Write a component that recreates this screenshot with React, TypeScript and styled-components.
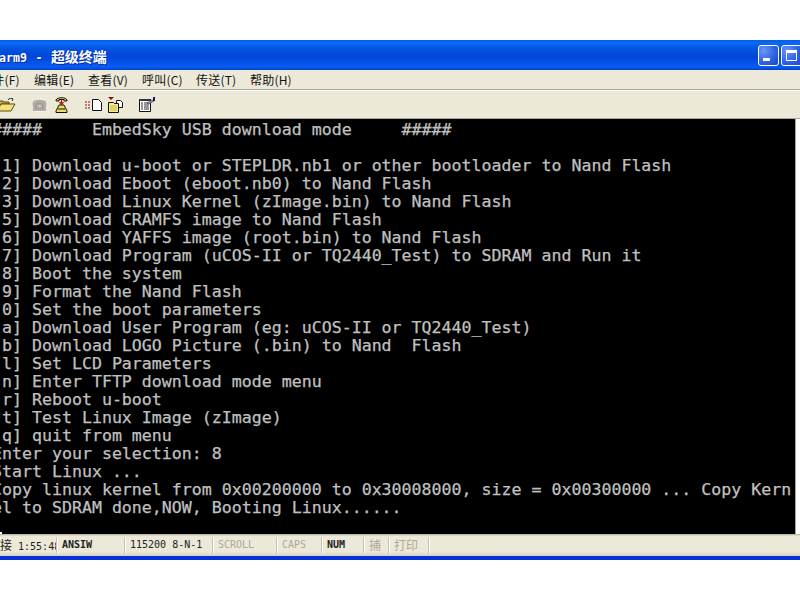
import { createGlobalStyle, styled } from 'styled-components'

const GlobalStyle = createGlobalStyle`
  html, body {
    margin: 0;
    padding: 0;
    height: 100%;
    background: #fff;
    overflow: hidden;
  }
`

const menus = ['文件(F)', '编辑(E)', '查看(V)', '呼叫(C)', '传送(T)', '帮助(H)']

const terminalText = `#####     EmbedSky USB download mode     #####

[1] Download u-boot or STEPLDR.nb1 or other bootloader to Nand Flash
[2] Download Eboot (eboot.nb0) to Nand Flash
[3] Download Linux Kernel (zImage.bin) to Nand Flash
[5] Download CRAMFS image to Nand Flash
[6] Download YAFFS image (root.bin) to Nand Flash
[7] Download Program (uCOS-II or TQ2440_Test) to SDRAM and Run it
[8] Boot the system
[9] Format the Nand Flash
[0] Set the boot parameters
[a] Download User Program (eg: uCOS-II or TQ2440_Test)
[b] Download LOGO Picture (.bin) to Nand  Flash
[l] Set LCD Parameters
[n] Enter TFTP download mode menu
[r] Reboot u-boot
[t] Test Linux Image (zImage)
[q] quit from menu
Enter your selection: 8
Start Linux ...
Copy linux kernel from 0x00200000 to 0x30008000, size = 0x00300000 ... Copy Kern
el to SDRAM done,NOW, Booting Linux......`

export default function App() {
  return (
    <>
      <GlobalStyle />
      <Window>
        <TitleBar>
          <TitleText>
            arm9 - <TitleHan>超级终端</TitleHan>
          </TitleText>
          <WindowButton aria-label="minimize">
            <svg width="19" height="19" viewBox="0 0 19 19">
              <rect x="4" y="12" width="7" height="3" fill="#fff" />
            </svg>
          </WindowButton>
          <WindowButton aria-label="maximize">
            <svg width="19" height="19" viewBox="0 0 19 19">
              <path d="M4.500 6.500h10v8h-10z" fill="none" stroke="#fff" />
              <rect x="4" y="4" width="11" height="3" fill="#fff" />
            </svg>
          </WindowButton>
        </TitleBar>
        <MenuBar>
          {menus.map((m) => (
            <MenuItem key={m}>{m}</MenuItem>
          ))}
        </MenuBar>
        <ToolBar>
          <ToolIcon $width={35}>
            <svg width="20" height="14" viewBox="0 0 20 14">
              <path d="M1 3h6l1 1h5v2H5L2 12H1z" fill="#c8a93a" stroke="#5a4a10" />
              <path d="M5 6h14l-4 7H1z" fill="#f6e27a" stroke="#5a4a10" />
              <path d="M12 2c1-2 3-2 5-1M17 1l-2-1M17 1l-1 2" fill="none" stroke="#333" />
            </svg>
          </ToolIcon>
          <ToolIcon $width={24}>
            <svg width="17" height="14" viewBox="0 0 17 14">
              <path d="M1 5C1 0 16 0 16 5v2c0 2-1 2-1 2l1 2c0 2-1 2.500-2 2.500H3c-1 0-2-.5-2-2.500l1-2s-1 0-1-2z" fill="#b0aea4" stroke="#f4f2ea" />
              <path d="M5 6h7M4 8h9M4 10h9" stroke="#8f8d84" />
              <ellipse cx="8.500" cy="8" rx="2.500" ry="1.500" fill="#c8c6bc" />
            </svg>
          </ToolIcon>
          <ToolIcon $width={30}>
            <svg width="13" height="16" viewBox="0 0 13 16">
              <path d="M1 3c1-3 10-3 11 0v1H9V2.500H4V4H1z" fill="#e8d050" stroke="#111" />
              <path d="M6.500 3v4M4.500 5l2 2.500 2-2.500" fill="none" stroke="#c02020" strokeWidth="1.300" />
              <path d="M4 8h5l3 6v1.500H1V14z" fill="#f0dc60" stroke="#111" />
              <path d="M3 12h7" stroke="#111" />
            </svg>
          </ToolIcon>
          <ToolIcon $width={23}>
            <svg width="17" height="12" viewBox="0 0 17 12">
              <path d="M0 3h2M3 3h2M0 6h2M3 6h2M0 9h2M3 9h2" stroke="#8a1010" />
              <path d="M7.500.5h6l3 3v8h-9z" fill="#fff" stroke="#111" />
            </svg>
          </ToolIcon>
          <ToolIcon $width={31}>
            <svg width="15" height="16" viewBox="0 0 15 16">
              <path d="M0 0h6L3 3z" fill="#8a1010" />
              <path d="M8.500 3.500h4l2 2v5h-6z" fill="#fff" stroke="#111" />
              <path d="M.5 5.500h5l1 1h4v9H.5z" fill="#f7ec8a" stroke="#111" />
              <path d="M2 9h7M2 11h7M2 13h7" stroke="#c8b84a" />
            </svg>
          </ToolIcon>
          <ToolIcon $width={22}>
            <svg width="16" height="15" viewBox="0 0 16 15">
              <path d="M.5 3.500h11v11H.5z" fill="#fff" stroke="#111" />
              <path d="M0 2h12v2H0z" fill="#333" />
              <path d="M2 6h2M5 6h5M2 8h2M5 8h5M2 10h2M5 10h5M2 12h2M5 12h5" stroke="#333" />
              <path d="M8 6l5-3 2 1-5 3z" fill="#8aa0b8" stroke="#334" strokeWidth=".6" />
              <rect x="14" y="0" width="2" height="4" fill="#0a1a70" />
            </svg>
          </ToolIcon>
        </ToolBar>
        <TerminalRow>
          <Screen>
            <Output>{terminalText}</Output>
            <Cursor />
          </Screen>
          <ScrollEdge />
        </TerminalRow>
        <StatusBar>
          <StatusCell $width={77} $on>
            <Han>连接</Han> 1:55:48
          </StatusCell>
          <StatusCell $width={68} $on $bold>
            ANSIW
          </StatusCell>
          <StatusCell $width={88} $on>
            115200 8-N-1
          </StatusCell>
          <StatusCell $width={64}>SCROLL</StatusCell>
          <StatusCell $width={45}>CAPS</StatusCell>
          <StatusCell $width={42} $on $bold>
            NUM
          </StatusCell>
          <StatusCell $width={25}>
            <Han>捕</Han>
          </StatusCell>
          <StatusCell $width={40}>
            <Han>打印</Han>
          </StatusCell>
        </StatusBar>
      </Window>
    </>
  )
}

const Window = styled.div`
  width: 840px;
  margin: 40px 0 0 -20px;
  display: flex;
  flex-direction: column;
  background: #ece9d8;
  border-bottom: 4px solid #0831d9;
  box-shadow: inset 0 -1px 0 #001ea0;
`

const TitleBar = styled.div`
  height: 30px;
  box-sizing: border-box;
  display: flex;
  align-items: center;
  gap: 2px;
  padding: 1px 18px 0 19px;
  background: linear-gradient(
    180deg,
    #0a5ae8 0%,
    #0a6af6 10%,
    #0353e0 30%,
    #0046d8 55%,
    #0556ec 80%,
    #0a5cf0 90%,
    #0340c8 100%
  );
`

const TitleText = styled.div`
  flex: 1;
  font: bold 11.6px 'DejaVu Sans Mono', monospace;
  word-spacing: 1.5px;
  color: #fff;
  text-shadow: 1px 1px 0 #0a2a9a;
  white-space: pre;
`

const TitleHan = styled.span`
  font: bold 14px 'Noto Sans CJK SC', sans-serif;
`

const WindowButton = styled.div`
  width: 21px;
  height: 21px;
  box-sizing: border-box;
  border: 1px solid #fff;
  border-radius: 3px;
  display: flex;
  background: radial-gradient(circle at 25% 25%, #6a96f6 0%, #2f62e6 55%, #1c44c8 100%);
`

const MenuBar = styled.div`
  height: 20px;
  box-sizing: border-box;
  display: flex;
  align-items: center;
  padding-left: 0;
  border-bottom: 1px solid #aca899;
`

const MenuItem = styled.div`
  width: 54px;
  font: 12px 'Noto Sans CJK SC', 'Liberation Sans', sans-serif;
  letter-spacing: 0.2px;
  color: #111;
  white-space: nowrap;
`

const ToolBar = styled.div`
  height: 29px;
  box-sizing: border-box;
  display: flex;
  align-items: center;
  padding-left: 16px;
  border-top: 1px solid #fff;
  border-bottom: 1px solid #aca899;
`

const ToolIcon = styled.div<{ $width: number }>`
  width: ${(p) => p.$width}px;
  display: flex;
  align-items: center;
`

const TerminalRow = styled.div`
  height: 415px;
  display: flex;
`

const Screen = styled.div`
  width: 815px;
  background: #000;
  box-sizing: border-box;
  padding: 2px 0 0 12px;
  position: relative;
  overflow: hidden;
`

const Output = styled.pre`
  margin: 0;
  font-family: 'DejaVu Sans Mono', monospace;
  font-size: 16.6px;
  line-height: 18px;
  color: #c0c0c0;
  -webkit-text-stroke: 0.25px #c0c0c0;
`

const Cursor = styled.div`
  position: absolute;
  left: 12px;
  top: 413px;
  width: 10px;
  height: 2px;
  background: #fff;
`

const ScrollEdge = styled.div`
  flex: 1;
  background: #fff;
  border-left: 1px solid #aca899;
`

const StatusBar = styled.div`
  height: 22px;
  box-sizing: border-box;
  display: flex;
  align-items: center;
  background: linear-gradient(180deg, #aca899 0, #ece9d8 2px, #ece9d8 18px, #d6d2c0 100%);
`

const StatusCell = styled.div<{ $width: number; $on?: boolean; $bold?: boolean }>`
  width: ${(p) => p.$width}px;
  height: 16px;
  box-sizing: border-box;
  overflow: hidden;
  white-space: pre;
  padding-left: 5px;
  border-right: 1px solid #c5c2b2;
  box-shadow: 1px 0 0 #fff;
  font: ${(p) => (p.$bold ? 'bold' : 'normal')} 10px/16px 'DejaVu Sans Mono', monospace;
  color: ${(p) => (p.$on ? '#222' : '#aca899')};
  &:first-child {
    padding-left: 8px;
  }
`

const Han = styled.span`
  font: 12px/16px 'Noto Sans CJK SC', sans-serif;
`
